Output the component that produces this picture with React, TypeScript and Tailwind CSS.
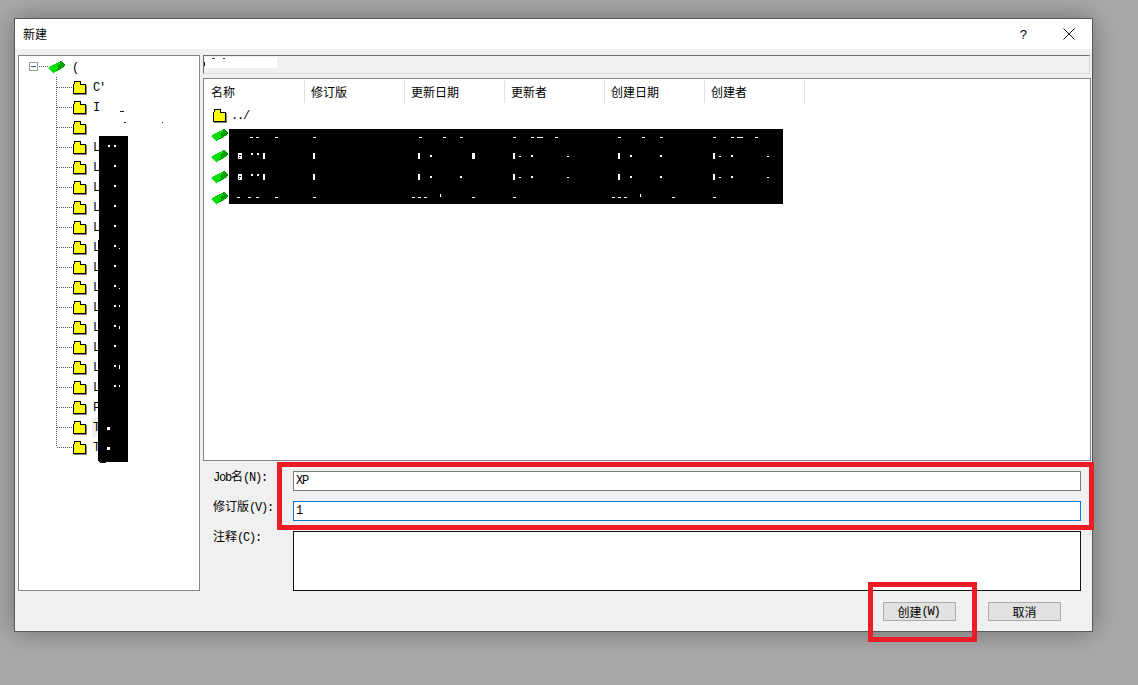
import React from "react";

const CJK = "font-['Noto_Sans_CJK_SC','Liberation_Sans',sans-serif]";

function Mono({ children }: { children: React.ReactNode }) {
  return <span className="font-['Liberation_Mono',monospace] text-[12px] tracking-[-1.2px]">{children}</span>;
}

function Folder() {
  return (
    <svg width="14" height="14" viewBox="0 0 14 14" shapeRendering="crispEdges" className="mt-[2px] shrink-0">
      <rect x="1" y="4" width="13" height="10" fill="#808080" />
      <rect x="0" y="3" width="13" height="10" fill="#000" />
      <rect x="1" y="0" width="7" height="4" fill="#000" />
      <rect x="2" y="1" width="5" height="2" fill="#ffff00" />
      <rect x="1" y="4" width="11" height="8" fill="#ffff00" />
      <rect x="1" y="3" width="6" height="1" fill="#ffff00" />
    </svg>
  );
}

const chipRows = [
  "............dd...",
  "..........ggdgd..",
  "........ggggdddd.",
  "......gggggdgdgdd",
  "....ggggggddddddd",
  "..ggggggggddgdgd.",
  ".gggggggggdddddl.",
  "lgggggggggdgdl...",
  ".lggggggggddl....",
  "..lgggggddl......",
  "...lggggl........",
  "....lgl..........",
  ".....l...........",
];
const chipColors: Record<string, string> = { g: "#00e000", d: "#009000", l: "#a8e8a8" };

function Chip() {
  return (
    <svg width="17" height="13" viewBox="0 0 17 13" shapeRendering="crispEdges" className="shrink-0">
      {chipRows.map((row, y) =>
        row.split("").map((c, x) =>
          c === "." ? null : <rect key={`${x}-${y}`} x={x} y={y} width="1" height="1" fill={chipColors[c]} />
        )
      )}
    </svg>
  );
}

function TreeRow({ label, last, selected }: { label: string; last?: boolean; selected?: boolean }) {
  return (
    <div className="flex h-5 items-center">
      <svg width="17" height="20" viewBox="0 0 17 20" shapeRendering="crispEdges" className="ml-[37px] shrink-0">
        <line x1="0.5" y1="0" x2="0.5" y2={last ? 10 : 20} stroke="#555" strokeDasharray="1 1" />
        <line x1="1" y1="10.5" x2="17" y2="10.5" stroke="#555" strokeDasharray="1 1" />
      </svg>
      <Folder />
      <span className={`ml-[5px] flex h-5 w-[30px] items-center pl-px pt-[2px] text-black ${selected ? "bg-[#f0f0f0]" : ""}`}>
        <Mono>{label}</Mono>
      </span>
    </div>
  );
}

const treeLabels = ["C'", "I", "", ...Array(13).fill("L"), "F", "T", "T"];
const columns = ["名称", "修订版", "更新日期", "更新者", "创建日期", "创建者"];

type R = [number, number, number, number];

const treeSpecks: R[] = [
  [108, 145, 2, 2], [114, 145, 2, 2], [114, 165, 2, 2], [114, 185, 2, 2], [114, 205, 2, 2], [114, 225, 2, 2],
  [114, 245, 2, 2], [119, 248, 1, 1], [114, 265, 2, 2], [114, 285, 2, 2], [119, 288, 1, 1], [114, 305, 2, 2],
  [119, 305, 1, 2], [114, 325, 2, 2], [119, 326, 1, 3], [114, 345, 2, 2], [114, 365, 2, 2], [119, 365, 1, 4],
  [114, 385, 2, 2], [119, 385, 1, 2], [107, 427, 3, 3], [107, 447, 3, 3],
];

const row1 = [250, 256, 275, 313, 419, 443, 460, 513, 531, 537, 540, 555, 618, 642, 660, 713, 731, 737, 740, 755];
const row4 = [237, 248, 256, 275, 313, 412, 418, 424, 472, 513, 612, 618, 624, 672, 713];
const bars = [263, 313, 418, 513, 618, 713];
const dashes = [519, 567, 719, 767];
const ticks = [430, 531, 630, 660, 731];

function ListMask() {
  return (
    <svg width="554" height="75" viewBox="229 129 554 75" shapeRendering="crispEdges" className="absolute left-[229px] top-[129px]">
      <rect x="229" y="129" width="554" height="75" fill="#000" />
      {row1.map((x) => <rect key={`a${x}`} x={x} y="137" width="3" height="1" fill="#fff" />)}
      {row4.map((x) => <rect key={`d${x}`} x={x} y="197" width="3" height="1" fill="#fff" />)}
      <rect x="440" y="194" width="1" height="3" fill="#fff" />
      <rect x="640" y="194" width="1" height="3" fill="#fff" />
      {[0, 21].map((dy) => (
        <g key={dy} fill="#fff">
          <rect x="238" y={153 + dy} width="4" height="6" />
          <rect x="239" y={155 + dy} width="2" height="1" fill="#000" />
          <rect x="239" y={157 + dy} width="1" height="1" fill="#000" />
          <rect x="251" y={153 + dy} width="2" height="2" />
          <rect x="257" y={153 + dy} width="2" height="2" />
          {bars.map((x) => <rect key={x} x={x} y={153 + dy} width="2" height="6" />)}
          {dashes.map((x) => <rect key={x} x={x} y={156 + dy} width="2" height="1" />)}
          {ticks.map((x) => <rect key={x} x={x} y={155 + dy} width="2" height="2" />)}
        </g>
      ))}
      <rect x="472" y="153" width="3" height="6" fill="#fff" />
      <rect x="460" y="176" width="2" height="2" fill="#fff" />
    </svg>
  );
}

function TreeMask() {
  return (
    <svg width="31" height="327" viewBox="98 136 31 327" shapeRendering="crispEdges" className="absolute left-[98px] top-[136px]">
      <rect x="99" y="136" width="29" height="326" fill="#000" />
      <rect x="98" y="240" width="2" height="221" fill="#000" />
      <rect x="100" y="460" width="6" height="3" fill="#000" />
      {treeSpecks.map(([x, y, w, h]) => <rect key={`${x}-${y}`} x={x} y={y} width={w} height={h} fill="#fff" />)}
    </svg>
  );
}

export default function App() {
  return (
    <div className={`relative h-[685px] w-[1138px] overflow-hidden bg-[#a9a9a9] pl-[14px] pt-[18px] text-[12px] leading-none text-black ${CJK}`}>
      <div className="flex h-[614px] w-[1079px] flex-col border border-[#595959] shadow-[0_0_24px_rgba(0,0,0,0.35)]">
        {/* Title bar */}
        <div className="flex h-[30px] shrink-0 items-center bg-white pl-2">
          <span className="text-[12px]">新建</span>
          <span className="ml-auto mr-[36px] font-['Liberation_Sans',sans-serif] text-[13px]">?</span>
          <svg width="12" height="12" viewBox="0 0 12 12" className="mr-[17px]">
            <path d="M0.5 0.5L11.5 11.5M11.5 0.5L0.5 11.5" stroke="#111" strokeWidth="1" fill="none" />
          </svg>
        </div>

        {/* Body */}
        <div className="flex flex-1 bg-[#f0f0f0] pl-[3px] pt-[6px]">
          {/* Tree */}
          <div className="h-[536px] w-[182px] shrink-0 border border-[#84848c] bg-white pt-px">
            <div className="flex h-5 items-center">
              <svg width="20" height="20" viewBox="0 0 20 20" shapeRendering="crispEdges" className="ml-[10px] shrink-0">
                <rect x="0.5" y="5.5" width="8" height="8" fill="#fff" stroke="#9a9a9a" />
                <rect x="2" y="9" width="5" height="1" fill="#3a5aa0" />
                <line x1="10" y1="9.5" x2="19" y2="9.5" stroke="#555" strokeDasharray="1 1" />
              </svg>
              <span className="-ml-px"><Chip /></span>
              <span className="ml-[7px]"><Mono>(</Mono></span>
            </div>
            {treeLabels.map((label, i) => (
              <TreeRow key={i} label={label} last={i === treeLabels.length - 1} selected={i === 17} />
            ))}
          </div>

          {/* Right column */}
          <div className="ml-[3px] flex w-[888px] shrink-0 flex-col">
            <div className="h-[19px] w-[887px] border border-[#dcdcdc] border-l-[#707070] border-t-[#707070] bg-[#f0f0f0]" />

            <div className="mt-1 h-[383px] border border-[#84848c] bg-white">
              <div className="flex h-[25px] pl-px pt-px">
                {columns.map((c) => (
                  <div key={c} className="flex h-[23px] w-[100px] items-center border-r border-[#e0e0e0] pl-[6px] text-[12px]">
                    {c}
                  </div>
                ))}
              </div>
              <div className="flex h-[21px] items-center pl-[9px]">
                <Folder />
                <span className="ml-[4px]"><Mono>../</Mono></span>
              </div>
              {[0, 1, 2, 3].map((i) => (
                <div key={i} className="flex h-[21px] items-center pl-[7px]">
                  <Chip />
                </div>
              ))}
            </div>

            {/* Form */}
            <div className="mt-[10px] flex flex-col gap-[10px]">
              <div className="flex">
                <label className="-mt-px w-[90px] shrink-0 pl-[10px] text-[12px]">
                  <Mono>Job</Mono>名<Mono>(N):</Mono>
                </label>
                <div className="flex h-5 w-[788px] items-center border border-[#7a7a7a] bg-white pl-[2px]">
                  <Mono>XP</Mono>
                </div>
              </div>
              <div className="flex">
                <label className="-mt-px w-[90px] shrink-0 pl-[10px] text-[12px]">
                  修订版<Mono>(V):</Mono>
                </label>
                <div className="flex h-5 w-[788px] items-center border border-[#0078d7] bg-white pl-[2px]">
                  <Mono>1</Mono>
                </div>
              </div>
              <div className="flex">
                <label className="-mt-px w-[90px] shrink-0 pl-[10px] text-[12px]">
                  注释<Mono>(C):</Mono>
                </label>
                <div className="h-[60px] w-[788px] border border-[#111] bg-white" />
              </div>
            </div>

            {/* Buttons */}
            <div className="mt-[11px] flex justify-end gap-[32px] pr-[30px]">
              <button className="flex h-[19px] w-[73px] items-center justify-center border border-[#adadad] bg-[#e1e1e1] pr-[2px] text-[12px]">
                创建<Mono>(W)</Mono>
              </button>
              <button className="flex h-[19px] w-[73px] items-center justify-center border border-[#adadad] bg-[#e1e1e1] text-[12px]">
                取消
              </button>
            </div>
          </div>
        </div>
      </div>

      {/* Redactions laid over the content */}
      <div className="absolute left-[205px] top-[57px] h-[11px] w-[72px] bg-white" />
      <div className="absolute left-[204px] top-[62px] h-[4px] w-px bg-black" />
      <div className="absolute left-[212px] top-[58px] h-px w-[3px] bg-[#333]" />
      <div className="absolute left-[223px] top-[58px] h-px w-[2px] bg-[#333]" />
      <div className="absolute left-[99px] top-[112px] h-[8px] w-[70px] bg-white" />
      <div className="absolute left-[93px] top-[117px] h-[10px] w-[76px] bg-white" />
      <div className="absolute left-[120px] top-[111px] h-px w-[4px] bg-[#222]" />
      <div className="absolute left-[124px] top-[122px] h-px w-[2px] bg-[#222]" />
      <div className="absolute left-[162px] top-[122px] h-px w-px bg-[#222]" />
      <TreeMask />
      <ListMask />

      {/* Red annotation boxes */}
      <div className="absolute left-[277px] top-[462px] h-[68px] w-[817px] border-[5px] border-[#ed1c24]" />
      <div className="absolute left-[868px] top-[582px] h-[60px] w-[109px] border-[5px] border-[#ed1c24]" />
    </div>
  );
}
